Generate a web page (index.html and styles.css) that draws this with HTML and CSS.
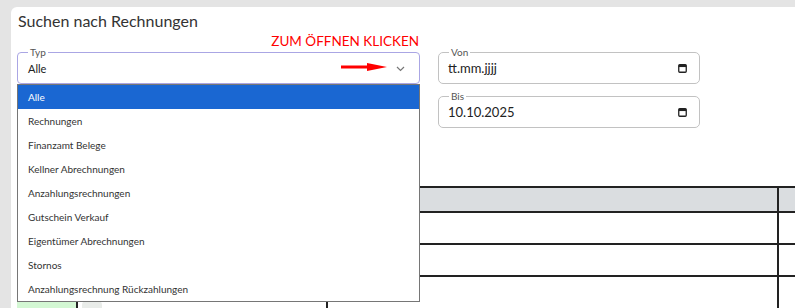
FILE: index.html
```html
<!DOCTYPE html>
<html lang="de">
<head>
<meta charset="utf-8">
<title>Suchen nach Rechnungen</title>
<link rel="stylesheet" href="styles.css">
</head>
<body>
<div class="card">
  <h1 class="title">Suchen nach Rechnungen</h1>
  <div class="form">
    <div class="select-wrap">
      <div class="hint">ZUM ÖFFNEN KLICKEN</div>
      <div class="field field-select">
        <span class="legend">Typ</span>
        <span class="value">Alle</span>
        <svg class="arrow" width="48" height="10" viewBox="0 0 48 10"><path d="M0 5H30" stroke="#f00" stroke-width="3"/><path d="M26 1L46 5L26 9Z" fill="#f00"/></svg>
        <svg class="chev" width="9" height="6" viewBox="0 0 9 6"><path d="M1 1L4.5 4.5L8 1" fill="none" stroke="#777" stroke-width="1.2"/></svg>
      </div>
      <ul class="menu">
        <li class="active">Alle</li>
        <li>Rechnungen</li>
        <li>Finanzamt Belege</li>
        <li>Kellner Abrechnungen</li>
        <li>Anzahlungsrechnungen</li>
        <li>Gutschein Verkauf</li>
        <li>Eigentümer Abrechnungen</li>
        <li>Stornos</li>
        <li>Anzahlungsrechnung Rückzahlungen</li>
      </ul>
    </div>
    <div class="dates">
      <div class="field field-date">
        <span class="legend">Von</span>
        <span class="value">tt.mm.jjjj</span>
        <svg class="cal" width="9" height="9" viewBox="0 0 9 9"><rect x="0.75" y="0.75" width="7.5" height="7.5" rx="1" fill="none" stroke="#222" stroke-width="1.3"/><rect x="0.75" y="0.75" width="7.5" height="2.3" fill="#222"/></svg>
      </div>
      <div class="field field-date">
        <span class="legend">Bis</span>
        <span class="value">10.10.2025</span>
        <svg class="cal" width="9" height="9" viewBox="0 0 9 9"><rect x="0.75" y="0.75" width="7.5" height="7.5" rx="1" fill="none" stroke="#222" stroke-width="1.3"/><rect x="0.75" y="0.75" width="7.5" height="2.3" fill="#222"/></svg>
      </div>
    </div>
  </div>
  <table class="grid">
    <colgroup><col class="c1"><col class="c2"><col class="c3"><col class="c4"></colgroup>
    <thead><tr><th></th><th></th><th></th><th></th></tr></thead>
    <tbody>
      <tr><td></td><td></td><td></td><td></td></tr>
      <tr><td></td><td></td><td></td><td></td></tr>
      <tr><td class="ok"></td><td><div class="pill"></div></td><td></td><td></td></tr>
    </tbody>
  </table>
</div>
</body>
</html>
```
FILE: styles.css
```css
* { box-sizing: border-box; }
html, body { margin: 0; padding: 0; }
body {
  background: #e4e4e4;
  font-family: Lato, "Noto Sans", sans-serif;
  color: #333;
  overflow: hidden;
  height: 308px;
}
.card {
  margin: 7px 0 0 11px;
  background: #fff;
  border-radius: 6px 0 0 0;
  padding: 4px 0 0 6px;
  height: 301px;
  width: 784px;
  overflow: hidden;
}
.title {
  margin: 0;
  font-size: 16px;
  line-height: 20px;
  font-weight: 400;
  color: #333;
  padding-left: 1px;
}
.form {
  display: flex;
  gap: 18px;
  margin-top: 21px;
  align-items: flex-start;
}
.select-wrap {
  position: relative;
  width: 403px;
}
.hint {
  position: absolute;
  right: 1px;
  bottom: 100%;
  margin-bottom: 3px;
  font-size: 13.5px;
  line-height: 16px;
  color: #f00;
}
.field {
  position: relative;
  height: 32px;
  border-radius: 5px;
  display: flex;
  align-items: center;
  padding: 0 10px;
}
.field-select {
  border: 1px solid #aaa6e4;
  border-radius: 4px;
}
.legend {
  position: absolute;
  top: -7px;
  left: 10px;
  padding: 0 2px;
  background: #fff;
  font-size: 10px;
  line-height: 12px;
  color: #555;
}
.value {
  flex: 1;
  font-size: 11px;
  color: #222;
  padding-top: 0;
}
.arrow {
  position: absolute;
  left: 323px;
  top: 9px;
}
.chev {
  margin-right: 4px;
  margin-top: 1px;
}
.menu {
  position: absolute;
  top: 100%;
  left: 0;
  width: 403px;
  margin: 0;
  padding: 0;
  list-style: none;
  background: #fff;
  border: 1px solid #767676;
  z-index: 5;
}
.menu li {
  height: 24px;
  line-height: 24px;
  padding-left: 10px;
  font-size: 10px;
  color: #333;
}
.menu li.active {
  background: #1a67d2;
  color: #fff;
}
.dates {
  width: 262px;
  display: flex;
  flex-direction: column;
  gap: 12px;
}
.field-date {
  border: 1px solid #c2c2c2;
  padding: 0 12px 0 9px;
}
.field-date .value {
  font-size: 13px;
}
.grid {
  margin-top: 58px;
  border-collapse: collapse;
  table-layout: fixed;
  width: 860px;
}
.grid col.c1 { width: 60px; }
.grid col.c2 { width: 250px; }
.grid col.c3 { width: 451px; }
.grid col.c4 { width: 99px; }
.grid th, .grid td {
  border-top: 2px solid #222;
  border-right: 2px solid #222;
  padding: 0;
}
.grid th {
  background: #dadde0;
  height: 25px;
}
.grid td { height: 32px; }
.grid td.ok { background: #d3f7d3; }
.pill {
  width: 20px;
  height: 14px;
  margin: 24px 0 0 4px;
  background: #e9ece9;
  border-radius: 4px;
}
```
